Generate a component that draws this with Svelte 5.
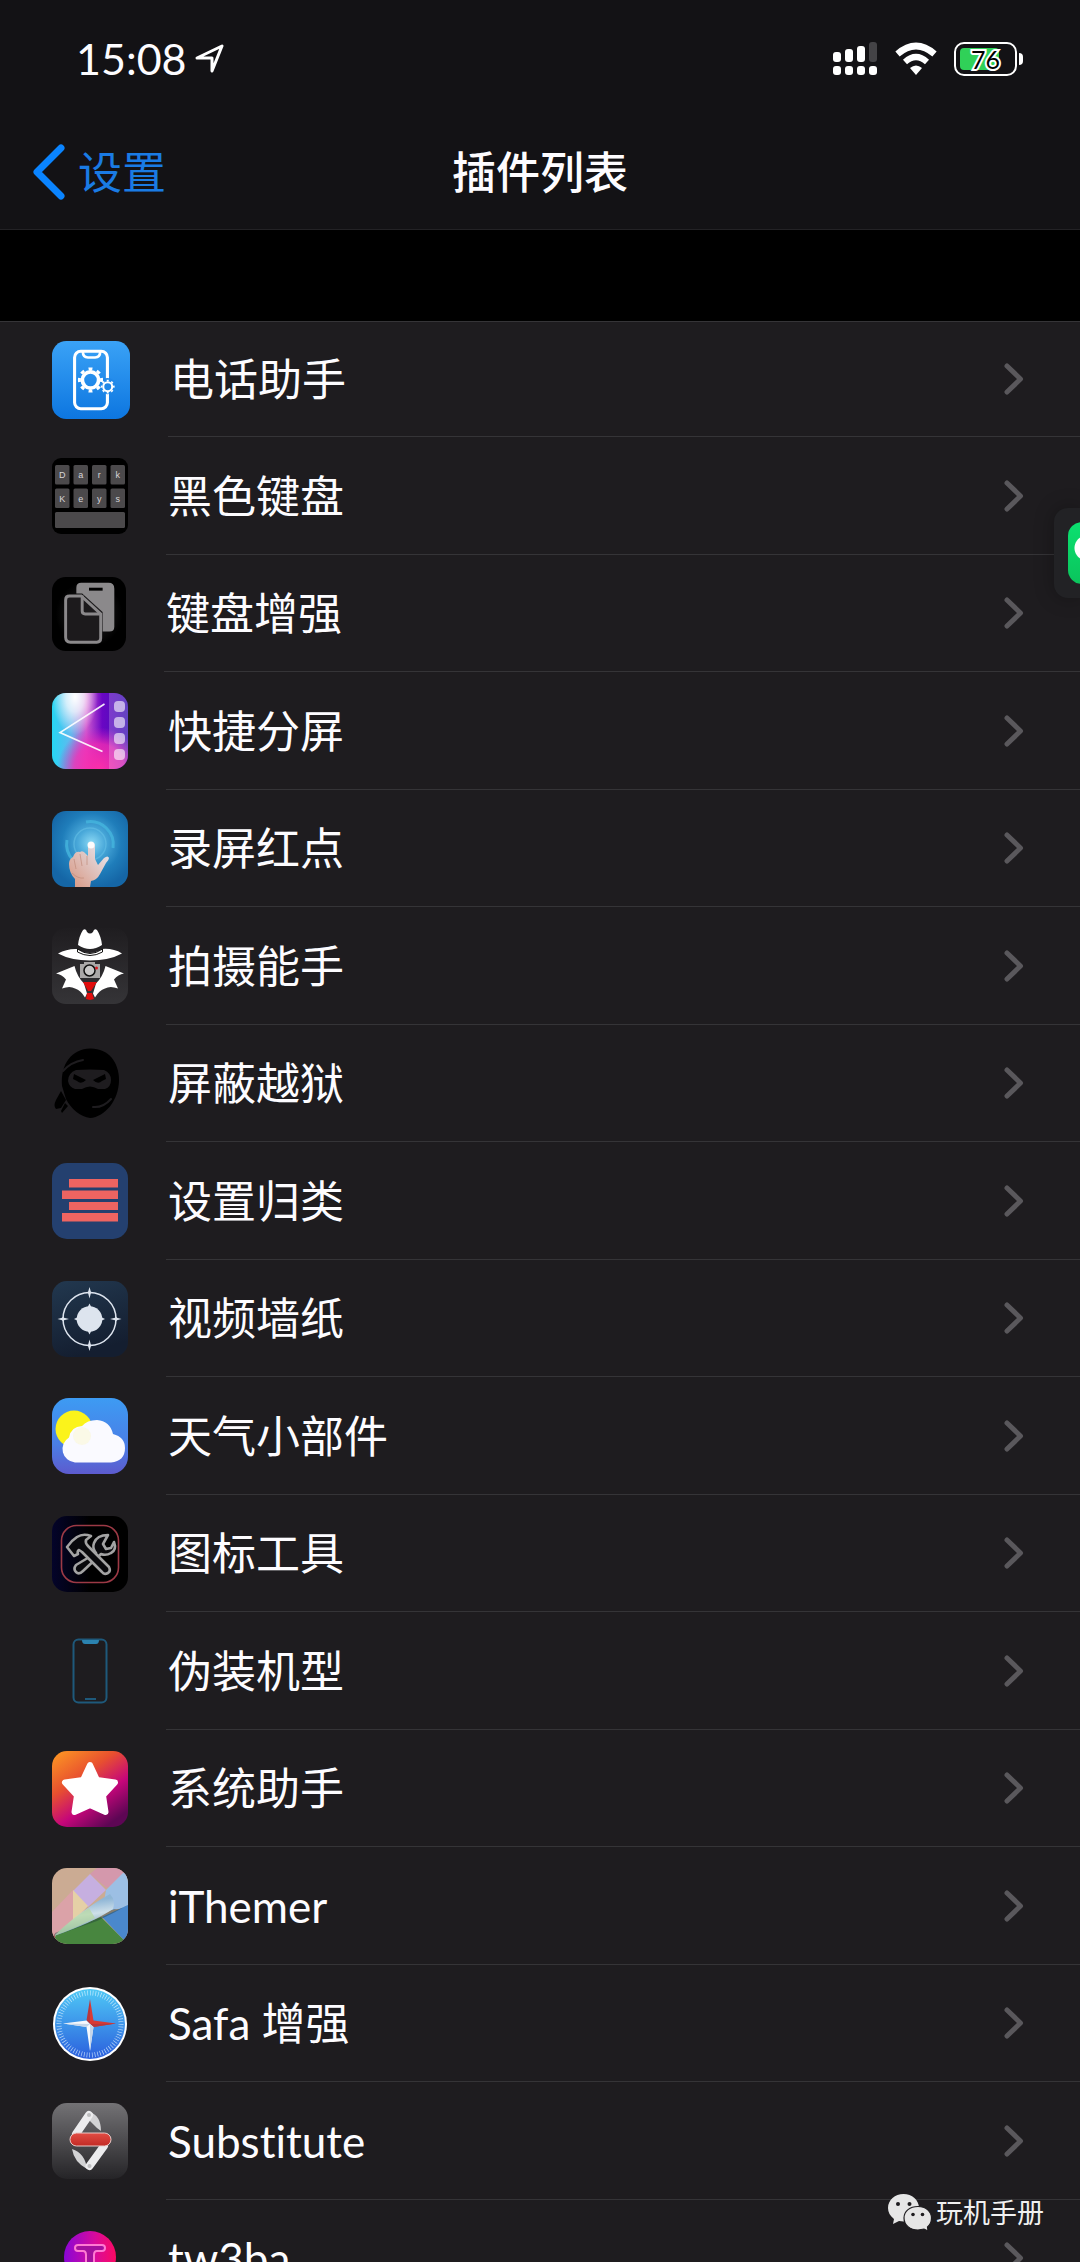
<script lang="ts">
  type Plugin = { icon: string; name: string };

  const plugins: Plugin[] = [
    { icon: "phone", name: "电话助手" },
    { icon: "keys", name: "黑色键盘" },
    { icon: "pages", name: "键盘增强" },
    { icon: "split", name: "快捷分屏" },
    { icon: "touch", name: "录屏红点" },
    { icon: "spy", name: "拍摄能手" },
    { icon: "ninja", name: "屏蔽越狱" },
    { icon: "bars", name: "设置归类" },
    { icon: "target", name: "视频墙纸" },
    { icon: "weather", name: "天气小部件" },
    { icon: "tools", name: "图标工具" },
    { icon: "device", name: "伪装机型" },
    { icon: "star", name: "系统助手" },
    { icon: "themer", name: "iThemer" },
    { icon: "compass", name: "Safa 增强" },
    { icon: "substitute", name: "Substitute" },
    { icon: "tweak", name: "tw3ba" },
  ];

  const keyRows = ["Dark", "Keys"];
  const battery = 76;
</script>

{#snippet gear(cx: number, cy: number, r: number)}
  <circle {cx} {cy} r={r * 0.66} fill="none" stroke="#fff" stroke-width={r * 0.3} />
  <circle
    {cx}
    {cy}
    r={r * 0.9}
    fill="none"
    stroke="#fff"
    stroke-width={r * 0.24}
    pathLength="16"
    stroke-dasharray="0.9 1.1"
    stroke-dashoffset="0.45"
  />
{/snippet}

{#snippet pluginIcon(icon: string)}
  <svg class="icon {icon}" viewBox="0 0 76 76" aria-hidden="true">
    {#if icon === "phone"}
      <linearGradient id="phone-bg" x2="0" y2="1">
        <stop offset="0" stop-color="#3aa2f6" />
        <stop offset="1" stop-color="#0d76e0" />
      </linearGradient>
      <rect width="76" height="76" rx="14" fill="url(#phone-bg)" />
      <rect x="22" y="10" width="32" height="56" rx="6" fill="none" stroke="#fff" stroke-width="3" />
      <path d="M30 10q0 6 5 6h7q5 0 5-6" fill="none" stroke="#fff" stroke-width="2.5" />
      <circle cx="54" cy="44" r="8" fill="#1f87e8" />
      {@render gear(37.5, 38, 12)}
      {@render gear(54.3, 44.5, 6.6)}
    {:else if icon === "keys"}
      <rect width="76" height="76" rx="9" fill="#000" />
      {#each keyRows as row, r}
        {#each row.split("") as letter, c}
          <rect x={3 + c * 18.5} y={7 + r * 23.5} width="14.5" height="19.5" rx="1.5" fill="#4b494b" />
          <text x={10.2 + c * 18.5} y={20 + r * 23.5}>{letter}</text>
        {/each}
      {/each}
      <rect x="3" y="54" width="70" height="16" rx="1.5" fill="#4b494b" />
    {:else if icon === "pages"}
      <radialGradient id="pages-bg">
        <stop offset="0" stop-color="#2c2a2c" />
        <stop offset="0.9" stop-color="#000" />
      </radialGradient>
      <rect width="76" height="76" rx="14" fill="url(#pages-bg)" />
      <path d="M30 6h28q6 0 6 6v39q0 5-5 5h-7V36L31 17H25v-6q0-5 5-5z" fill="#8b898b" />
      <path d="M38 12.5h14" stroke="#000" stroke-width="3" />
      <path d="M30 19.500H18q-4 0-4 4V62q0 5 5 5h27q4 0 4-4V38z" fill="#1c1a1c" stroke="#8b898b" stroke-width="3" />
      <path d="M31 19v16q0 3 3 3h15" fill="none" stroke="#8b898b" stroke-width="3" />
    {:else if icon === "split"}
      <clipPath id="split-clip"><rect width="76" height="76" rx="14" /></clipPath>
      <linearGradient id="split-base">
        <stop offset="0" stop-color="#25d7f4" />
        <stop offset="0.25" stop-color="#62b8ee" />
        <stop offset="0.45" stop-color="#d35bd0" />
        <stop offset="0.66" stop-color="#6a06c4" />
        <stop offset="1" stop-color="#3c14b4" />
      </linearGradient>
      <radialGradient id="split-white" cx="0.5" cy="0.05" r="0.5">
        <stop offset="0" stop-color="#fff" />
        <stop offset="0.4" stop-color="#fff" stop-opacity="0.75" />
        <stop offset="1" stop-color="#fff" stop-opacity="0" />
      </radialGradient>
      <radialGradient id="split-pink" cx="0.62" cy="1" r="0.55">
        <stop offset="0" stop-color="#fb2fa9" />
        <stop offset="0.6" stop-color="#f22cb4" stop-opacity="0.8" />
        <stop offset="1" stop-color="#d020c0" stop-opacity="0" />
      </radialGradient>
      <g clip-path="url(#split-clip)">
        <rect width="76" height="76" fill="url(#split-base)" />
        <path d="M0 0h46v76H0z" fill="url(#split-white)" />
        <rect width="76" height="76" fill="url(#split-pink)" />
        <rect x="57" width="19" height="76" fill="#fff" opacity="0.2" />
        {#each [8, 24, 40, 56] as y}
          <rect x="62" {y} width="11" height="11" rx="4" fill="#fff" opacity="0.6" />
        {/each}
      </g>
      <path d="M52.500 11L8 39.500l42.500 19" fill="none" stroke="#fff" stroke-width="1.6" opacity="0.9" />
    {:else if icon === "touch"}
      <radialGradient id="touch-bg" cx="0.52" cy="0.42" r="0.6">
        <stop offset="0" stop-color="#8ad8f4" />
        <stop offset="0.3" stop-color="#4aa9da" />
        <stop offset="0.65" stop-color="#1f7dba" />
        <stop offset="1" stop-color="#1566a6" />
      </radialGradient>
      <linearGradient id="touch-hand" x1="1" x2="0" y2="1">
        <stop offset="0.2" stop-color="#e4dde2" />
        <stop offset="1" stop-color="#d8957f" />
      </linearGradient>
      <rect width="76" height="76" rx="14" fill="url(#touch-bg)" />
      <circle cx="38" cy="33" r="16" fill="none" stroke="#6cc6ea" stroke-width="1.500" opacity="0.5" />
      <path d="M34 11a23 23 0 0 1 27 26M15 29a23 23 0 0 0 6 20" fill="none" stroke="#45b5dd" stroke-width="3" opacity="0.8" />
      <path
        d="M23 76v-8q-6-6-6-15 0-5 4-7 2-6 7-5 3-2 6 2l2 2V35q0-4 3-4 4 0 4 4v13l3 6 6-7q4-3 5 0 0 2-3 5l-6 11q-3 6-9 7l-1 6z"
        fill="url(#touch-hand)"
      />
      <path d="M22 48l2 10M28 43l2 12M35 45v9M20 62q6 6 12 5" fill="none" stroke="#c08b7c" stroke-width="1" opacity="0.7" />
      <circle cx="39" cy="34" r="3.500" fill="#fff" opacity="0.9" />
    {:else if icon === "spy"}
      <linearGradient id="spy-bg" x2="0" y2="1">
        <stop offset="0" stop-color="#1f1d20" />
        <stop offset="1" stop-color="#353437" />
      </linearGradient>
      <rect width="76" height="76" rx="14" fill="url(#spy-bg)" />
      <path d="M6 25.500q9-5 19-4.500 13 8 25 0 11-1 20 4.500Q57 32.500 38 32.500T6 25.500z" fill="#fff" />
      <path d="M26 17q1-9 5-15 3-2 4 2 3 3 6 0 1-4 4-2 4 6 5 15-12 8-24 0z" fill="#fff" />
      <path d="M25.500 21q12.500 9 25 0v3q-12.500 7-25 0z" fill="#fff" stroke="#111" stroke-width="1" />
      <path d="M22.500 38L4 45.500q6 1 10 6l-4 9q8-3 13 0 6 2 10 9l2-4-3-10q-7-7-9.500-17.500z" fill="#fff" />
      <path d="M53.500 38L72 45.500q-6 1-10 6l4 9q-8-3-13 0-6 2-10 9l-2-4 3-10q7-7 9.500-17.500z" fill="#fff" />
      <path d="M28 36h4v-2h11v2h5v14H28z" fill="#aaa8a8" />
      <circle cx="37.500" cy="42.500" r="5.500" fill="#c9c8c8" stroke="#111" stroke-width="1.500" />
      <circle cx="44.500" cy="40" r="1.500" fill="#d51b22" />
      <path d="M31 54h14l-6 9h-3zM35 65h5l2 6-4 1-4-1z" fill="#e00d0d" />
    {:else if icon === "ninja"}
      <path d="M38 2.500C56 2 67 16 67 34c0 20-14 37-29 38-9-1-19-9-24-19l-4-13C8 18 20 3 38 2.500z" fill="#000" />
      <path d="M9 45l5 9-5 8-5 1q-3-3 0-9zM13 57l3 3-6 7-1-2z" fill="#000" />
      <path d="M16 35q0-8 8-11 14-1 28 0 7 3 7 10 0 7-6 9h-7q-8-5-16 0h-7q-6-2-7-8z" fill="#1e1c1f" />
      <path d="M22 28l12 6q-5 5-9 1l-4-2zM53 28l-12 6q5 5 9 1l4-2z" fill="#000" />
      <path d="M11 25q8-9 20-11M41 61q10 1 18-8" fill="none" stroke="#1e1c1f" stroke-width="2" stroke-linecap="round" />
    {:else if icon === "bars"}
      <rect width="76" height="76" rx="15" fill="#24406f" />
      <path d="M17 16h49v8.500H17zM10 27.500h56V36H10zM17 39h49v8H17zM10 50h56v8.500H10z" fill="#ee6461" />
    {:else if icon === "target"}
      <linearGradient id="target-bg" x2="0.3" y2="1">
        <stop offset="0" stop-color="#22384f" />
        <stop offset="1" stop-color="#141e30" />
      </linearGradient>
      <rect width="76" height="76" rx="15" fill="url(#target-bg)" />
      <g fill="#dde4ee">
        <circle cx="37.500" cy="38" r="12.800" />
        <circle cx="37.500" cy="38" r="26.500" fill="none" stroke="#dde4ee" stroke-width="1.500" />
        {#each [0, 90, 180, 270] as angle}
          <path
            transform="rotate({angle} 37.5 38)"
            d="M37.500 6l1.300 4.500 1 1-1 1-1.300 5-1.300-5-1-1 1-1zM37.500 22.500l2 4h-4z"
          />
        {/each}
      </g>
    {:else if icon === "weather"}
      <linearGradient id="weather-bg" x2="0" y2="1">
        <stop offset="0" stop-color="#3d9bf3" />
        <stop offset="0.6" stop-color="#4a7fe6" />
        <stop offset="1" stop-color="#5d5bce" />
      </linearGradient>
      <rect width="76" height="76" rx="17" fill="url(#weather-bg)" />
      <circle cx="22" cy="31" r="18.500" fill="#fbf31b" />
      <path d="M23 64.500a13.500 13.500 0 0 1-6-25q2-11 13-11.500 5-6 15-6 13 1 16 14 12 3 12 14 0 13-14 14.500z" fill="#fafaff" />
      <circle cx="30" cy="38" r="9" fill="#fbf8cf" opacity="0.5" />
    {:else if icon === "tools"}
      <linearGradient id="tools-bg">
        <stop offset="0" stop-color="#04042a" />
        <stop offset="0.5" stop-color="#000" />
      </linearGradient>
      <rect width="76" height="76" rx="15" fill="url(#tools-bg)" />
      <rect x="9.500" y="9.500" width="57" height="57" rx="15" fill="none" stroke="#9c3945" stroke-width="1.600" />
      <g stroke="#a3a3a3" stroke-width="2.600" stroke-linejoin="round" fill="#09090c">
        <path d="M44 37q-4-5-2-10 3-8 14-8l-5 9 3 5 5-1 3-6q3 8-3 11-5 3-10 1L31 55q-4 4-7 1-3-3 0-7z" />
        <path d="M15 31l5-6 5-4q6-4 14-1l-5 4q-1 3 2 6l21 21q2 4-1 6-4 2-6-1L30 36l-3-2q-2 1-1 4l-4 2z" />
      </g>
    {:else if icon === "device"}
      <rect x="21.500" y="6.500" width="33" height="63" rx="5" fill="none" stroke="#1e597b" stroke-width="2" />
      <path d="M30 7h17q0 4-3 4H33q-3 0-3-4z" fill="#2b83b0" />
      <path d="M33 66h11" stroke="#1e597b" stroke-width="2" />
    {:else if icon === "star"}
      <linearGradient id="star-bg" x2="0.7" y2="1">
        <stop offset="0.05" stop-color="#fb9224" />
        <stop offset="0.4" stop-color="#e8502f" />
        <stop offset="0.7" stop-color="#c5067a" />
        <stop offset="1" stop-color="#5d0654" />
      </linearGradient>
      <rect width="76" height="76" rx="15" fill="url(#star-bg)" />
      <path
        d="M38 14l7 15 18 2.500-12 13L53.500 61 38 54 22.500 61 25 44.500l-12-13L31 29z"
        fill="#fff"
        stroke="#fff"
        stroke-width="6"
        stroke-linejoin="round"
      />
    {:else if icon === "themer"}
      <clipPath id="themer-clip"><rect width="76" height="76" rx="15" /></clipPath>
      <linearGradient id="themer-roll" x1="0.4" x2="0.6" y2="1">
        <stop offset="0.2" stop-color="#8fb6d6" />
        <stop offset="0.5" stop-color="#cfe0ea" />
        <stop offset="0.9" stop-color="#5f90ac" />
      </linearGradient>
      <g clip-path="url(#themer-clip)">
        <path d="M0 0h76v76H0z" fill="#cbab93" />
        <path d="M38 6L45 0h31v8L55 20z" fill="#d498ac" />
        <path d="M21 22L0 44v32l21-22z" fill="#dba2a8" />
        <path d="M38 6l16 16-18 17-15-16z" fill="#c6afe0" />
        <path d="M54 22L71 5l5-2v36L50 44z" fill="#9cbfe4" />
        <path d="M21 22v32l15-16z" fill="#e5d0a6" />
        <path d="M0 76l4-9 45-18 27 27z" fill="#48863f" />
        <path d="M50 49l26-12v39L69 69z" fill="#4a88cc" />
        <path d="M0 70l3-4v10H0z" fill="#b04a50" />
        <path d="M2 68L45 53q17-8 31-16-7 5-14 4L3 65z" fill="#1b3a3a" opacity="0.4" />
        <path d="M2 68q30-28 56-42 6 7 3 15Q40 55 2 68z" fill="url(#themer-roll)" />
        <path d="M2 68q18-18 35-28l6 10Q22 61 2 68z" fill="#b6d8a0" opacity="0.7" />
      </g>
    {:else if icon === "compass"}
      <linearGradient id="compass-bg" x2="0" y2="1">
        <stop offset="0" stop-color="#4fc9f6" />
        <stop offset="1" stop-color="#2b5fdd" />
      </linearGradient>
      <circle cx="38" cy="38" r="37" fill="#fff" />
      <circle cx="38" cy="38" r="35" fill="url(#compass-bg)" />
      <circle
        cx="38"
        cy="38"
        r="31"
        fill="none"
        stroke="#e4f5ff"
        stroke-width="5"
        pathLength="144"
        stroke-dasharray="0.5 1.5"
        opacity="0.8"
      />
      <path d="M38 13l3.500 21.500L64 37.500l-22.500 3.500L38 38z" fill="#d93a35" />
      <path d="M38 13l-3.500 21.500L38 38zM38 38l26-.5-22.500 3.500z" fill="#b8373c" />
      <path d="M34.500 34.500L11 37.500l23.500 3.500L38 65l3.500-24L38 38z" fill="#f5f8fc" />
      <path d="M38 38L11 37.500l23.500 3.500zM38 38v27l3.500-24z" fill="#c5d6ea" />
    {:else if icon === "substitute"}
      <linearGradient id="substitute-bg" x2="0" y2="1">
        <stop offset="0" stop-color="#737275" />
        <stop offset="0.5" stop-color="#4c4b4e" />
        <stop offset="1" stop-color="#252427" />
      </linearGradient>
      <linearGradient id="substitute-pill" x2="0" y2="1">
        <stop offset="0" stop-color="#e14c44" />
        <stop offset="1" stop-color="#c22b25" />
      </linearGradient>
      <rect width="76" height="76" rx="15" fill="url(#substitute-bg)" />
      <path d="M38 9q11 4 11 19l-4-3-10-10zM20 46q13 4 15 20-13-7-15-20z" fill="#d2d2d4" />
      <path d="M37 12L24 31M37.500 63L52 43" stroke="#ececee" stroke-width="8" stroke-linecap="round" />
      <circle cx="37" cy="12" r="2" fill="#bdbdbf" />
      <circle cx="37.500" cy="63" r="2" fill="#bdbdbf" />
      <rect x="18" y="30" width="41" height="13" rx="6.500" fill="url(#substitute-pill)" stroke="#e9c9c7" stroke-width="1" />
    {:else if icon === "tweak"}
      <linearGradient id="tweak-bg">
        <stop offset="0" stop-color="#8a06d6" />
        <stop offset="0.6" stop-color="#d80b9c" />
        <stop offset="1" stop-color="#fb0a62" />
      </linearGradient>
      <circle cx="38" cy="36" r="26" fill="url(#tweak-bg)" />
      <path
        d="M26 24h24q3 0 3 3t-3 3h-5q-3 0-3 4v16h-8V34q0-4-3-4h-5q-3 0-3-3t3-3z"
        fill="#a3109e"
        stroke="#ff7ad2"
        stroke-width="2"
      />
    {/if}
  </svg>
{/snippet}

<div class="screen">
  <header>
    <div class="status-bar">
      <div class="clock">
        <span>15:08</span>
        <svg width="30" height="30" viewBox="0 0 30 30" aria-hidden="true">
          <path d="M2 14L27 2 17 27V14z" fill="none" stroke="#fff" stroke-width="3" stroke-linejoin="round" />
        </svg>
      </div>

      <div class="indicators">
        <svg width="46" height="34" viewBox="0 0 46 34" aria-hidden="true">
          <g fill="#fff">
            <rect x="1" y="10" width="8" height="10" rx="3" />
            <rect x="13" y="7" width="8" height="13" rx="3" />
            <rect x="25" y="4" width="8" height="16" rx="3" />
            <rect x="37" y="0" width="8" height="20" rx="3" fill="#444346" />
            {#each [1, 13, 25, 37] as x}
              <rect {x} y="24" width="8" height="9" rx="3" />
            {/each}
          </g>
        </svg>
        <svg width="42" height="34" viewBox="0 0 42 34" fill="none" stroke="#fff" aria-hidden="true">
          <path d="M2.500 12q18.500-16 37 0" stroke-width="6.500" />
          <path d="M10 20q11-10 22 0" stroke-width="6" />
          <path d="M15 26q6-5 12 0l-6 7z" fill="#fff" stroke="none" />
        </svg>
        <div class="battery">
          <div class="charge" style="width: {battery}%"></div>
          <span>{battery}</span>
        </div>
      </div>
    </div>

    <nav>
      <button class="back" type="button">
        <svg width="34" height="56" viewBox="0 0 34 56" aria-hidden="true">
          <path d="M29 4L5 28l24 24" fill="none" stroke="#0a84ff" stroke-width="7" stroke-linecap="round" stroke-linejoin="round" />
        </svg>
        设置
      </button>
      <h1>插件列表</h1>
    </nav>
  </header>

  <ul>
    {#each plugins as plugin}
      <li>
        <a href="#{plugin.icon}">
          {@render pluginIcon(plugin.icon)}
          <span class="row">
            {plugin.name}
            <svg class="chevron" width="20" height="34" viewBox="0 0 20 34" aria-hidden="true">
              <path d="M3 4l13.500 13L3 30" fill="none" stroke="#5a585c" stroke-width="5" stroke-linecap="round" stroke-linejoin="round" />
            </svg>
          </span>
        </a>
      </li>
    {/each}
  </ul>

  <!-- Floating app shortcut, mostly off the right edge -->
  <button class="floating" type="button" aria-label="微信">
    <span></span>
  </button>

  <div class="watermark">
    <svg width="44" height="38" viewBox="0 0 44 38" aria-hidden="true">
      <path d="M15.500 0C24 0 31 6 31 14s-7 13.500-15.500 13.500L11 27l-6 3 1-5C2 22 0 18 0 14 0 6 7 0 15.500 0z" fill="#e6e6e6" />
      <path
        d="M30 12.500c8 0 13.500 5 13.500 11.500 0 4-1.500 7-4 9l.5 4-4-2-6 1c-8 0-14-5-14-12s6-11.500 14-11.500z"
        fill="#e6e6e6"
        stroke="#1e1c1f"
        stroke-width="1.200"
      />
      <g fill="#1e1c1f">
        <circle cx="10" cy="10" r="2" />
        <circle cx="21.500" cy="10" r="2" />
        <circle cx="25" cy="20.500" r="1.800" />
        <circle cx="34.500" cy="20.500" r="1.800" />
      </g>
    </svg>
    <span>玩机手册</span>
  </div>
</div>

<style>
  :global(body) {
    margin: 0;
    background: #000;
  }

  .screen {
    position: relative;
    height: 100vh;
    overflow: hidden;
    background: #000;
    color: #fdfcff;
    font-family: Lato, "Noto Sans CJK SC", sans-serif;
    font-size: 44px;
    font-variant-ligatures: none;
    line-height: 52px;
  }

  button {
    border: 0;
    padding: 0;
    background: none;
    color: inherit;
    font: inherit;
  }

  header {
    background: #131215;
    border-bottom: 1px solid #232225;
  }

  /* Status bar */
  .status-bar {
    display: flex;
    align-items: center;
    justify-content: space-between;
    height: 117px;
    padding: 0 57px 0 76px;
  }

  .clock,
  .indicators {
    display: flex;
    align-items: center;
  }

  .clock {
    gap: 8px;
    font-size: 43px;
  }

  .indicators {
    gap: 17px;
  }

  .battery {
    position: relative;
    box-sizing: border-box;
    width: 63px;
    height: 34px;
    margin-right: 6px;
    padding: 4px;
    border: 2px solid #fff;
    border-radius: 10px;
  }

  .battery::after {
    content: "";
    position: absolute;
    top: 9px;
    right: -8px;
    width: 4px;
    height: 12px;
    border-radius: 0 6px 6px 0;
    background: #fff;
  }

  .charge {
    height: 100%;
    border-radius: 4px;
    background: #30d158;
  }

  .battery span {
    position: absolute;
    inset: 0;
    color: #000;
    font-size: 25px;
    line-height: 30px;
    text-align: center;
    -webkit-text-stroke: 4px #fff;
    paint-order: stroke fill;
  }

  /* Navigation bar */
  nav {
    display: grid;
    grid-template-columns: 1fr auto 1fr;
    align-items: center;
    height: 112px;
    padding: 0 32px 2px;
    box-sizing: border-box;
  }

  .back {
    display: flex;
    align-items: center;
    gap: 12px;
    color: #1a7be4;
  }

  h1 {
    margin: 0;
    font-size: 44px;
    font-weight: 500;
  }

  /* Plugin list */
  ul {
    margin: 91px 0 0;
    padding: 0;
    list-style: none;
    background: #1e1c1f;
  }

  li {
    height: 117px;
  }

  li:nth-child(even) {
    height: 118px;
  }

  li:first-child {
    box-sizing: border-box;
    height: 116px;
    border-top: 1px solid #353437;
  }

  a {
    display: flex;
    align-items: center;
    gap: 38px;
    height: 100%;
    padding-left: 52px;
    color: inherit;
    text-decoration: none;
  }

  .icon {
    flex: none;
    width: 76px;
    height: 76px;
  }

  .icon.phone {
    width: 78px;
    height: 78px;
  }

  .icon.pages {
    width: 74px;
    height: 74px;
  }

  .keys text {
    fill: #d8d6d8;
    font-family: "Liberation Sans", sans-serif;
    font-size: 9px;
    text-anchor: middle;
  }

  .row {
    display: flex;
    flex: 1;
    align-items: center;
    justify-content: space-between;
    box-sizing: border-box;
    height: 100%;
    padding: 0 56px 0 2px;
    border-bottom: 1px solid #353437;
  }

  /* Overlays */
  .floating {
    position: absolute;
    top: 508px;
    right: 0;
    display: flex;
    align-items: center;
    width: 26px;
    height: 90px;
    padding-left: 14px;
    overflow: hidden;
    border-radius: 14px 0 0 14px;
    background: #222225;
    box-shadow: 0 0 20px rgba(0, 0, 0, 0.3);
  }

  .floating span {
    flex: none;
    width: 62px;
    height: 62px;
    border-radius: 14px;
    background: radial-gradient(circle at 19px 26px, #fff 12px, transparent 13px), linear-gradient(#0be070, #0bc45c);
  }

  .watermark {
    position: absolute;
    right: 36px;
    bottom: 29px;
    display: flex;
    align-items: center;
    gap: 4px;
    color: #f0f0f0;
    font-size: 27px;
    line-height: 40px;
  }
</style>
